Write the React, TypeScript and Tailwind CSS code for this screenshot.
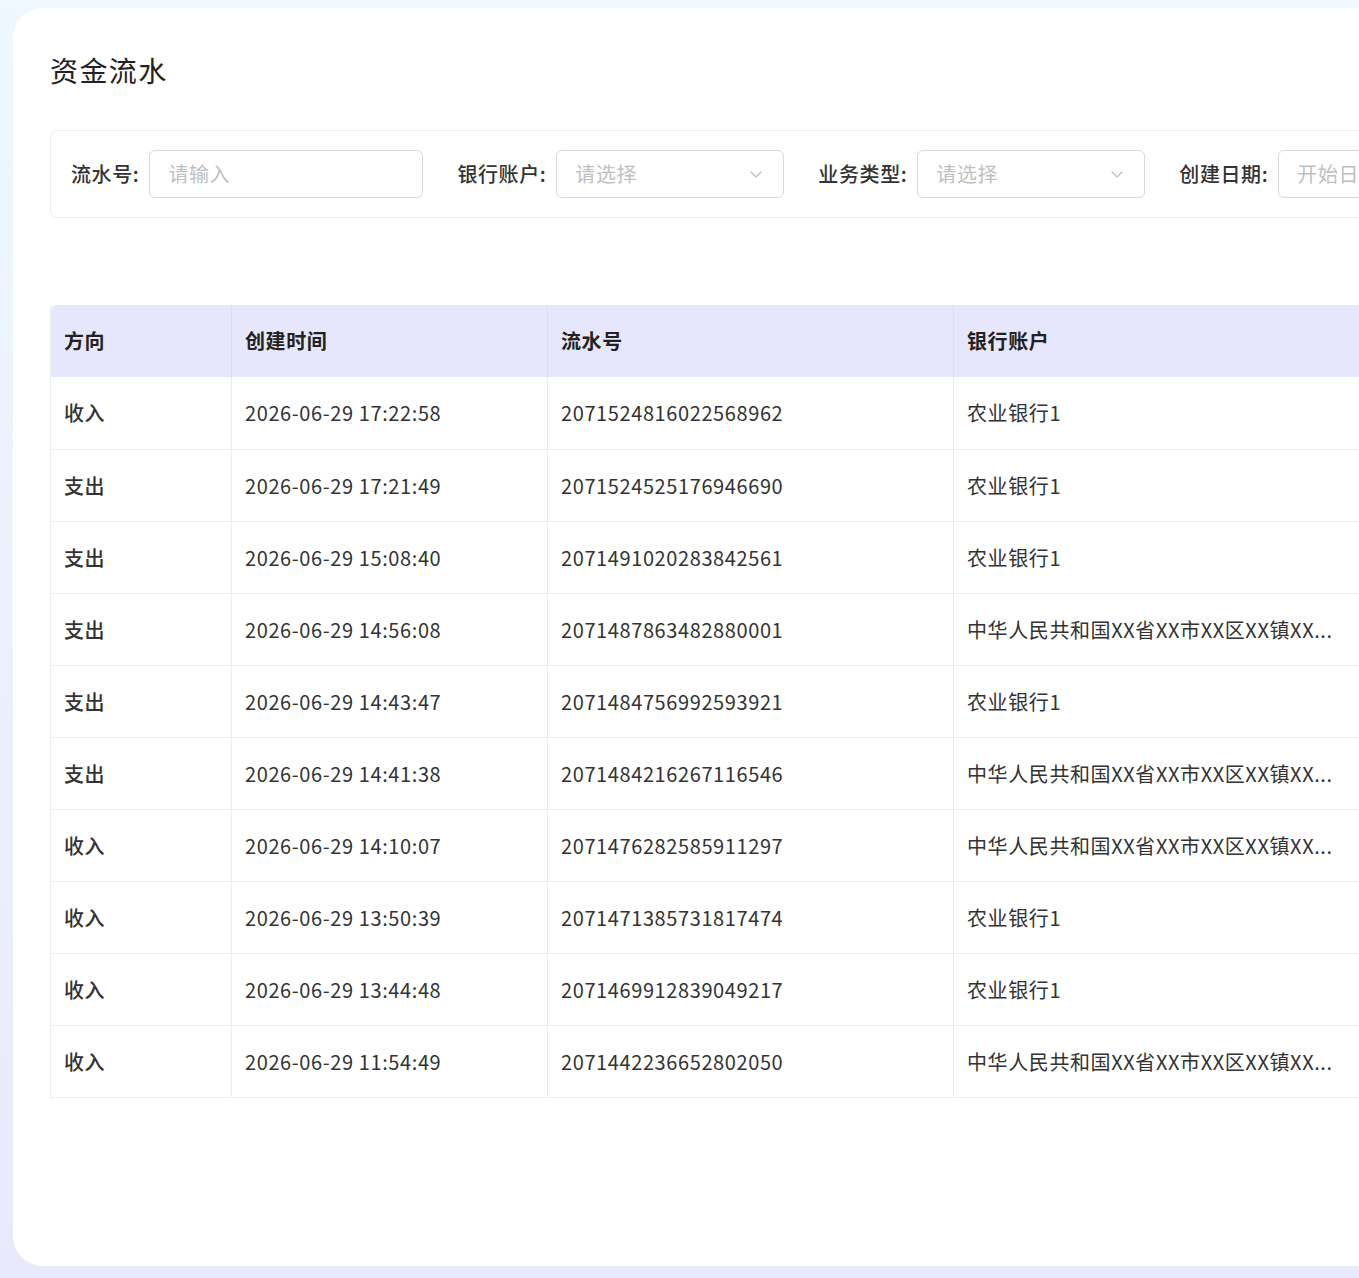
import React from "react";

const rows = [
  ["收入", "2026-06-29 17:22:58", "2071524816022568962", "农业银行1"],
  ["支出", "2026-06-29 17:21:49", "2071524525176946690", "农业银行1"],
  ["支出", "2026-06-29 15:08:40", "2071491020283842561", "农业银行1"],
  ["支出", "2026-06-29 14:56:08", "2071487863482880001", "中华人民共和国XX省XX市XX区XX镇XX..."],
  ["支出", "2026-06-29 14:43:47", "2071484756992593921", "农业银行1"],
  ["支出", "2026-06-29 14:41:38", "2071484216267116546", "中华人民共和国XX省XX市XX区XX镇XX..."],
  ["收入", "2026-06-29 14:10:07", "2071476282585911297", "中华人民共和国XX省XX市XX区XX镇XX..."],
  ["收入", "2026-06-29 13:50:39", "2071471385731817474", "农业银行1"],
  ["收入", "2026-06-29 13:44:48", "2071469912839049217", "农业银行1"],
  ["收入", "2026-06-29 11:54:49", "2071442236652802050", "中华人民共和国XX省XX市XX区XX镇XX..."],
];

const Chevron = () => (
  <svg width="18" height="18" viewBox="0 0 24 24" fill="none" stroke="#b8b8b8" strokeWidth="1.6">
    <path d="M5 9l7 7 7-7" />
  </svg>
);

const font = { fontFamily: '"Noto Sans CJK SC", "Noto Sans", sans-serif' };

export default function App() {
  const cols = "grid grid-cols-[180px_316px_406px_450px]";
  const label = "shrink-0 whitespace-nowrap font-medium text-[#333]";
  const box = "shrink-0 ml-[10px] h-[48px] border border-[#d9d9d9] rounded-[6px] flex items-center px-[18px] text-[#bfbfbf] whitespace-nowrap";
  return (
    <div className="w-[1359px] h-[1278px] overflow-hidden bg-gradient-to-b from-[#eef8fe] to-[#e9e9fb] pl-[13px] pt-[8px]" style={font}>
      <div className="w-[1420px] h-[1258px] bg-white rounded-[30px] pl-[37px] pt-[44px] text-[#333]">
        <h1 className="text-[28px] leading-[36px] text-[#222] tracking-wider">资金流水</h1>
        <div className="mt-[42px] w-[1400px] h-[88px] border border-[#eeeeee] rounded-[8px] flex items-center pl-[20px] text-[20px] tracking-[0.03em]">
          <span className={label}>流水号:</span>
          <div className={`${box} w-[274px]`}>请输入</div>
          <span className={`${label} ml-[34px]`}>银行账户:</span>
          <div className={`${box} w-[228px] justify-between`}>请选择<Chevron /></div>
          <span className={`${label} ml-[34px]`}>业务类型:</span>
          <div className={`${box} w-[228px] justify-between`}>请选择<Chevron /></div>
          <span className={`${label} ml-[34px]`}>创建日期:</span>
          <div className={`${box} w-[228px]`}>开始日期</div>
        </div>
        <div className="mt-[87px] w-[1400px] border-b border-l border-[#eeeeee] text-[20px] tracking-[0.03em]">
          <div className={`${cols} h-[72px] bg-[#e6e7fc] rounded-tl-[6px] font-bold text-[#222]`}>
            {["方向", "创建时间", "流水号", "银行账户"].map((h, i) => (
              <div key={i} className={`flex items-center px-[13px] ${i > 0 ? "border-l border-[#dcdcf5]" : ""}`}>{h}</div>
            ))}
          </div>
          {rows.map((r, ri) => (
            <div key={ri} className={`${cols} h-[72px] ${ri > 0 ? "border-t border-[#eeeeee]" : ""}`}>
              {r.map((c, i) => (
                <div key={i} className={`flex items-center px-[13px] whitespace-nowrap ${i > 0 ? "border-l border-[#eeeeee]" : ""} ${i === 0 ? "font-medium" : ""}`}>{c}</div>
              ))}
            </div>
          ))}
        </div>
      </div>
    </div>
  );
}
